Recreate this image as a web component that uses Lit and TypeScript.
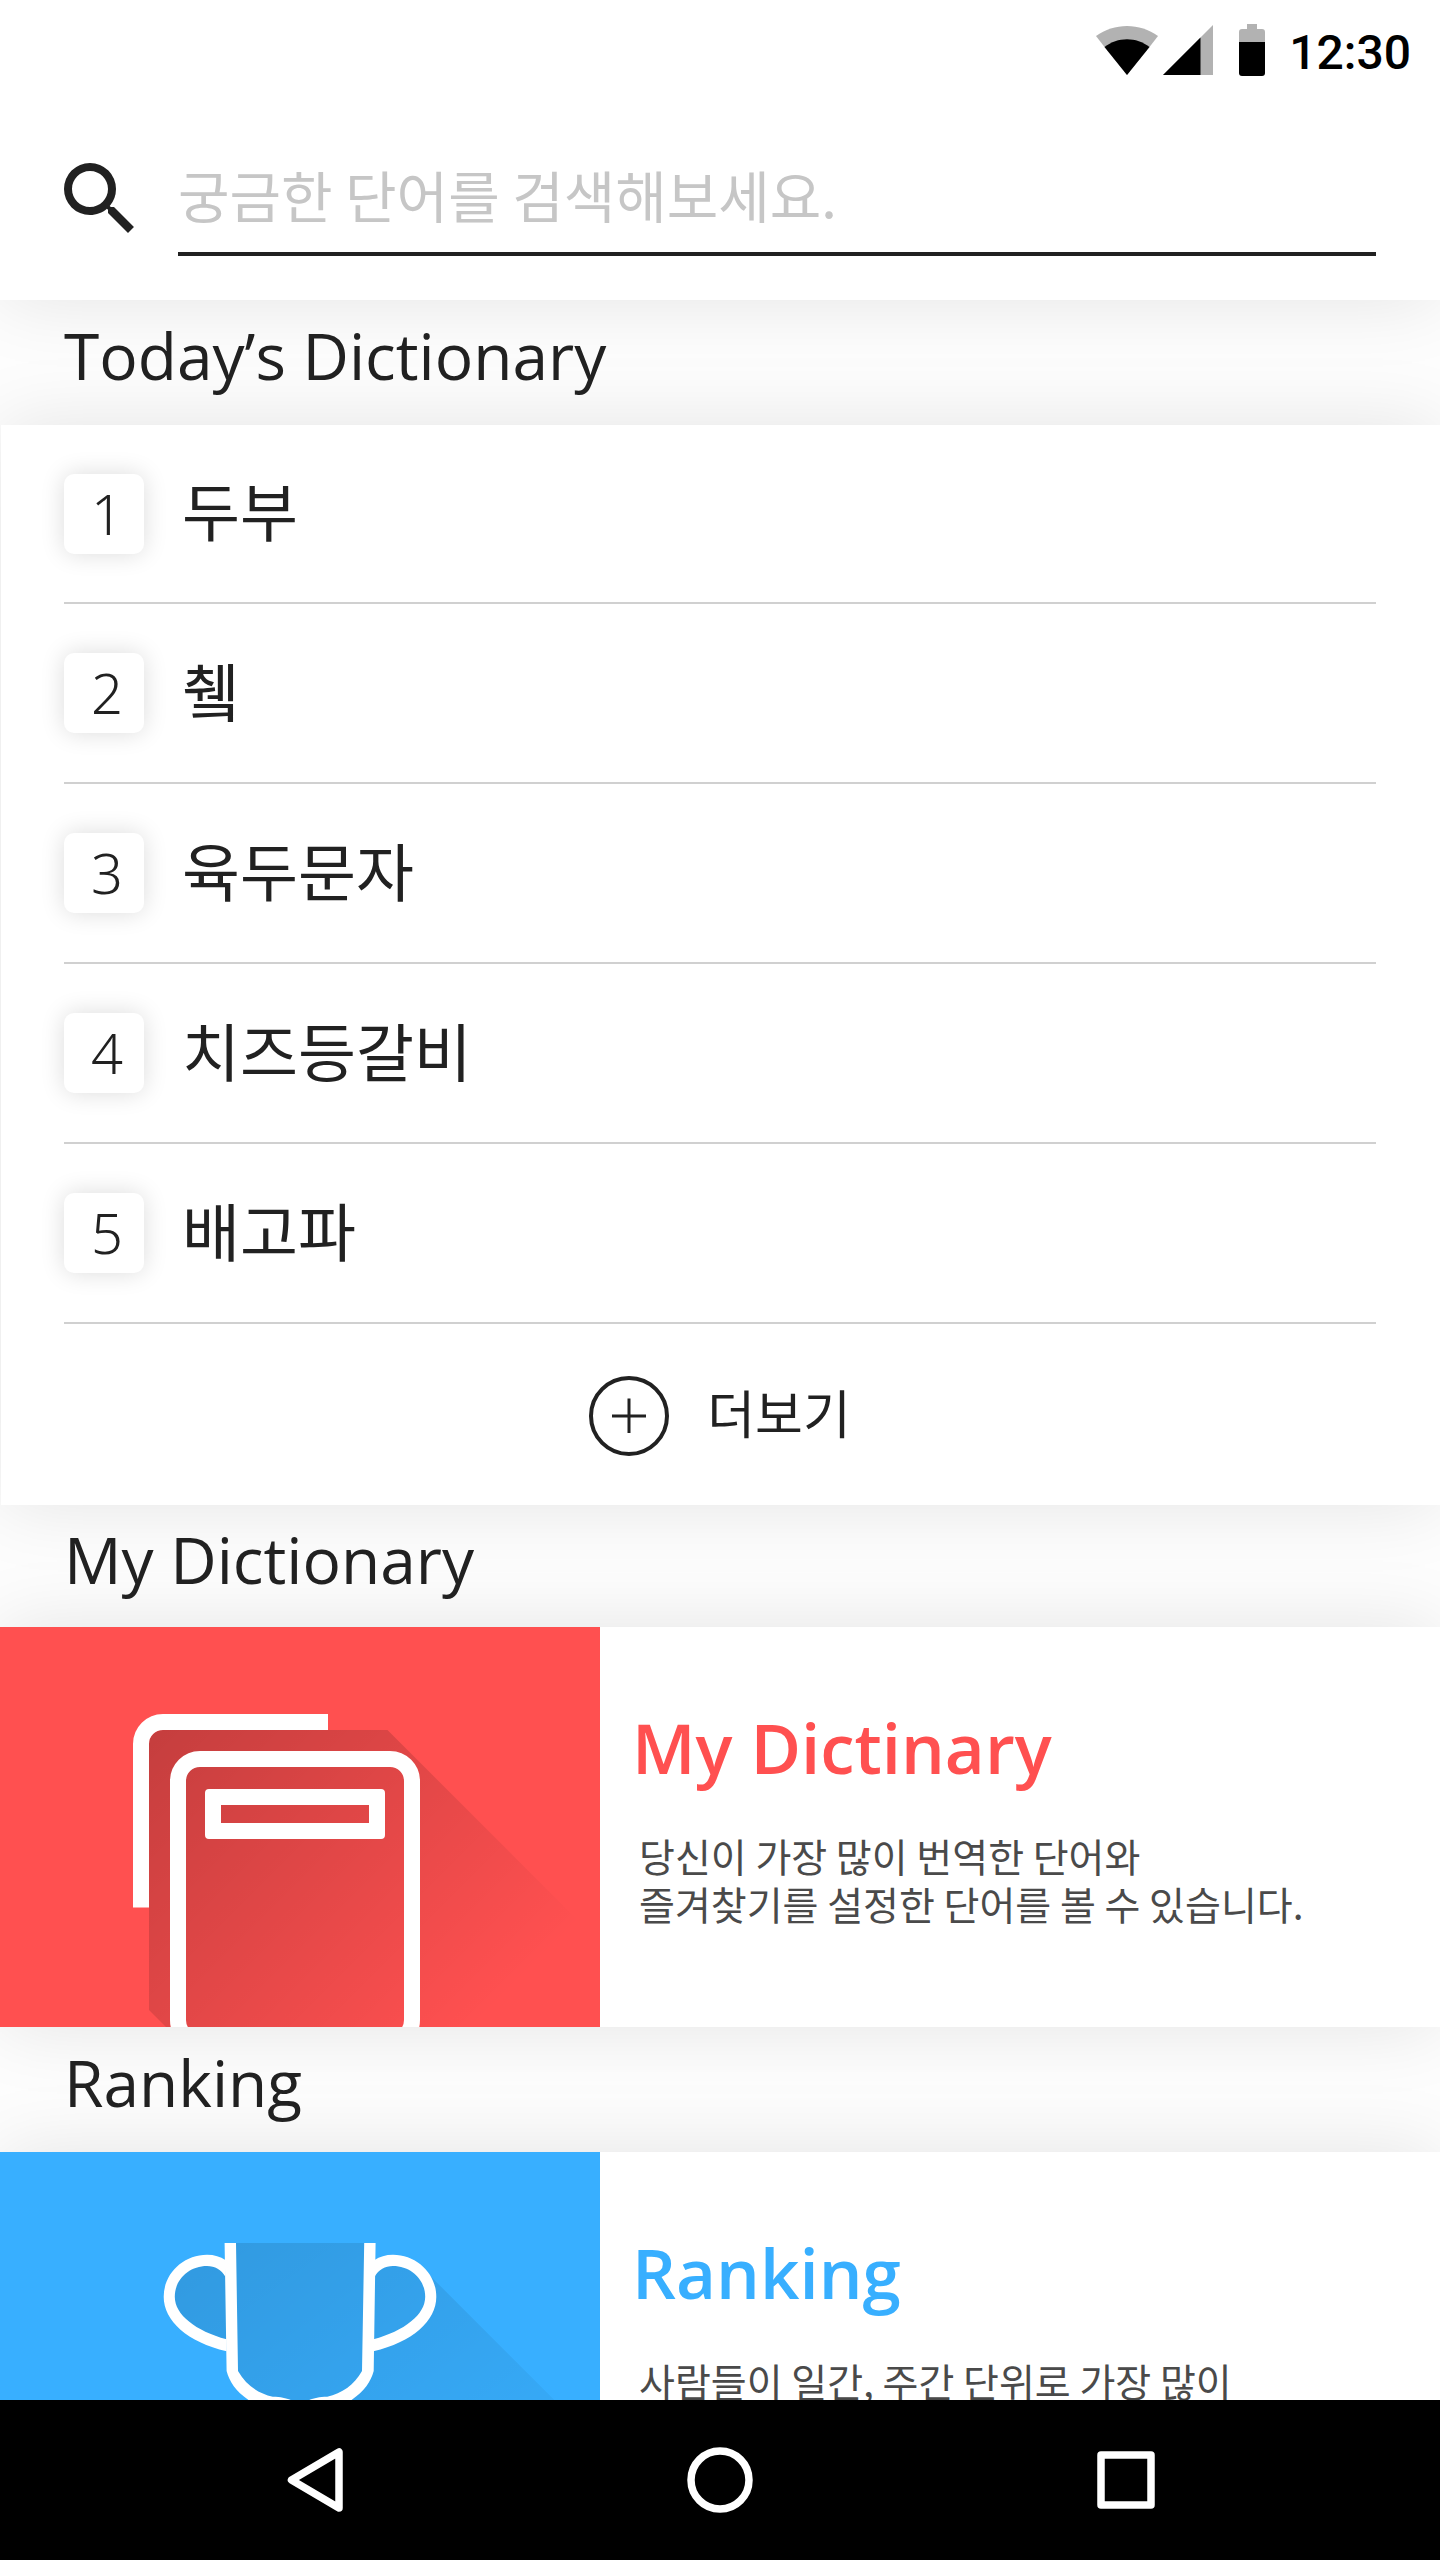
import { LitElement, html, svg, css } from "lit";
import { customElement } from "lit/decorators.js";

const words = ["두부", "췤", "육두문자", "치즈등갈비", "배고파"];

const wifiIcon = svg`<svg class="wifi" viewBox="0 0 62 49" aria-hidden="true">
  <path fill="#b2b2b2" d="M0 10C9 3.500 20 0 31 0s22 3.500 31 10L53.500 21 31 49 8.500 21z"/>
  <path fill="#000" d="M8.500 21C15 16 23 13.300 31 13.300s16 2.700 22.500 7.700L31 49z"/>
</svg>`;

const signalIcon = svg`<svg class="signal" viewBox="0 0 50 50" aria-hidden="true">
  <path fill="#b2b2b2" d="M50 0v50H0z"/>
  <path fill="#000" d="M37.500 12.500V50H0z"/>
</svg>`;

const batteryIcon = svg`<svg class="battery" viewBox="0 0 26 52" aria-hidden="true">
  <path fill="#b2b2b2" d="M8 0h10v5h5a3 3 0 0 1 3 3v12H0V8a3 3 0 0 1 3-3h5z"/>
  <path fill="#000" d="M0 18h26v31a3 3 0 0 1-3 3H3a3 3 0 0 1-3-3z"/>
</svg>`;

const searchIcon = svg`<svg class="search-icon" viewBox="3 3 17.500 17.500" aria-hidden="true">
  <path fill="#212121" d="M15.500 14h-.79l-.28-.27A6.471 6.471 0 0 0 16 9.500 6.500 6.500 0 1 0 9.500 16c1.610 0 3.090-.59 4.230-1.570l.27.28v.79l5 4.990L20.490 19l-4.990-5zm-6 0C7.010 14 5 11.990 5 9.500S7.010 5 9.500 5 14 7.010 14 9.500 11.990 14 9.500 14z"/>
</svg>`;

const plusIcon = svg`<svg class="plus" viewBox="0 0 80 80" fill="none" stroke="#212121" aria-hidden="true">
  <circle cx="40" cy="40" r="38" stroke-width="4"/>
  <path stroke-width="3" d="M23 40h34M40 22.500v34.500"/>
</svg>`;

const bookArt = svg`<svg class="drawing" viewBox="0 0 600 400" aria-hidden="true">
  <defs>
    <linearGradient id="book-shade" gradientUnits="userSpaceOnUse" x1="149" y1="103" x2="460" y2="414">
      <stop offset="0" stop-opacity=".23"/>
      <stop offset="1" stop-opacity="0"/>
    </linearGradient>
  </defs>
  <path fill="url(#book-shade)" d="M163 103h224.500L600 315.500V400H166l-17-17V117a14 14 0 0 1 14-14z"/>
  <g fill="none" stroke="#fff" stroke-width="16">
    <path d="M141 280.500V117a22 22 0 0 1 22-22h165"/>
    <rect x="178" y="132" width="234" height="283" rx="22"/>
  </g>
  <path fill="#fff" fill-rule="evenodd" d="M209 162h172a4 4 0 0 1 4 4v42a4 4 0 0 1-4 4H209a4 4 0 0 1-4-4v-42a4 4 0 0 1 4-4zM221 178v18h148v-18z"/>
</svg>`;

const cupArt = svg`<svg class="drawing" viewBox="0 0 600 400" aria-hidden="true">
  <defs>
    <linearGradient id="cup-shade" gradientUnits="userSpaceOnUse" x1="200" y1="90" x2="440" y2="420">
      <stop offset="0" stop-opacity=".12"/>
      <stop offset="1" stop-opacity=".02"/>
    </linearGradient>
  </defs>
  <path fill="url(#cup-shade)" d="M230 91h140v30c8-11 14-13 22-13 17 0 30 6 39 16.700L600 293.700V400H420L300 280l-10-32c-22 0-45-8-58-29v-25c-32-9-62-27-62-49 0-20 17-37 37-37 9 0 16 4 23 13z"/>
  <g fill="#fff">
    <path d="M224.600 91H236l2 128c8 14 20 22.500 34.800 25.700 8 0 13 1.300 18 3.300l9.200 3 9.200-3c5-2 10-3.300 18-3.300C342 241.500 354 233 362 219l2.200-128h11.400l-1.900 128c-3.200 12-10.700 22-26.700 32l-47 9-47-9c-16-10-23.200-20-26.400-32z"/>
    <path d="M225.400 108c-5-3.300-11-5.300-18.400-5.300-23.800 0-43.300 18.900-43.300 42 0 24.300 24 45.300 62.900 54.600v-12c-31-8.500-51.800-24.600-51.800-42.600 0-17.200 14.200-30.700 32.200-30.700 8 0 14.300 3.500 18.400 10.700z"/>
    <path d="M374.600 108c5-3.300 11-5.300 18.400-5.300 23.800 0 43.300 18.900 43.300 42 0 24.300-24 45.300-62.900 54.600v-12c31-8.500 51.800-24.600 51.800-42.600 0-17.200-14.200-30.700-32.200-30.700-8 0-14.300 3.500-18.400 10.700z"/>
  </g>
</svg>`;

@customElement("app-root")
export class AppRoot extends LitElement {
  static styles = css`
    :host {
      display: flex;
      flex-direction: column;
      height: 100vh;
      background: #fdfdfd;
      color: #212121;
      font-family: "Noto Sans CJK KR", "Noto Sans", sans-serif;
    }
    * { box-sizing: border-box; }
    h2, h3, p, ol { margin: 0; padding: 0; }
    svg { display: block; flex: none; }
    button {
      border: 0;
      padding: 0;
      background: none;
      color: inherit;
      font: inherit;
      cursor: pointer;
    }

    .content {
      flex: 1;
      min-height: 0;
      overflow-y: auto;
      scrollbar-width: none;
    }
    .panel {
      background: #fff;
      box-shadow: 0 0 72px rgba(0, 0, 0, 0.1);
    }

    .status {
      display: flex;
      justify-content: flex-end;
      align-items: center;
      height: 100px;
      padding-right: 29px;
      color: #000;
      font: 500 48px/56px Roboto, sans-serif;
    }
    .clock { padding-top: 6px; }
    .wifi { width: 62px; height: 49px; margin-right: 5px; }
    .signal { width: 50px; height: 50px; margin-right: 26px; }
    .battery { width: 26px; height: 52px; margin-right: 24px; }

    .search {
      display: flex;
      align-items: flex-start;
      gap: 44px;
      height: 200px;
      padding: 44px 64px 0;
    }
    .search-label { padding-top: 19px; }
    .search-icon { width: 70px; height: 70px; }
    .search-input {
      flex: 1;
      min-width: 0;
      height: 112px;
      padding: 0 0 10px;
      border: 0;
      border-bottom: 4px solid #212121;
      border-radius: 0;
      outline: 0;
      background: none;
      color: #212121;
      font: 400 56px/80px "Noto Sans CJK KR", sans-serif;
    }
    .search-input::placeholder { color: #c6c6c6; opacity: 1; }

    .band {
      display: flex;
      align-items: center;
      min-height: 125px;
      padding: 0 64px 13px;
      font: 400 64px/80px "Open Sans", "Noto Sans", sans-serif;
    }
    .band.short { min-height: 122px; }
    .band-text { position: relative; z-index: 1; font: inherit; }

    .today { margin-left: 1px; padding: 0 64px 0 63px; }
    .words { list-style: none; }
    .word {
      display: flex;
      align-items: center;
      gap: 38px;
      min-height: 180px;
      border-bottom: 2px solid #d0d0d0;
      font-size: 63px;
      line-height: 80px;
    }
    .word:first-child { min-height: 179px; }
    .word-text { padding-bottom: 9px; }
    .rank {
      flex: none;
      width: 80px;
      height: 80px;
      padding-left: 6px;
      border-radius: 10px;
      background: #fff;
      box-shadow: 0 0 24px rgba(0, 0, 0, 0.14);
      text-align: center;
      font: 350 56px/78px "Noto Sans", sans-serif;
    }
    .more {
      display: flex;
      align-items: center;
      justify-content: center;
      gap: 38px;
      width: 100%;
      height: 181px;
      padding-top: 3px;
      font-size: 52px;
      line-height: 72px;
    }
    .more-text { padding-bottom: 8px; }
    .plus { width: 80px; height: 80px; }

    .feature { display: flex; min-height: 400px; }
    .art {
      flex: none;
      width: 600px;
      max-width: 42%;
      overflow: hidden;
    }
    .art.red { background: #ff5050; }
    .art.blue { background: #38afff; }
    .drawing { width: 100%; height: auto; }
    .info {
      display: flex;
      flex-direction: column;
      flex: 1;
      padding: 72px 40px 0 32px;
    }
    .title { font: 600 69px/96px "Open Sans", "Noto Sans", sans-serif; }
    .title.red { color: #ff5050; }
    .title.blue { color: #38afff; }
    .desc {
      margin-top: 36px;
      padding-left: 7px;
      color: #4a4a4a;
      font-size: 39px;
      line-height: 48px;
      white-space: pre-line;
    }

    .nav {
      display: grid;
      grid-template-columns: repeat(3, 1fr);
      flex: none;
      height: 160px;
      padding: 0 112px;
      background: #000;
    }
    .nav-button { display: grid; place-items: center; }
    .nav-icon { width: 70px; height: 70px; }
  `;

  private feature(kind: string, title: string, text: string, art: unknown) {
    return html`<section class="panel feature">
      <div class="art ${kind}">${art}</div>
      <div class="info">
        <h3 class="title ${kind}">${title}</h3>
        <p class="desc">${text}</p>
      </div>
    </section>`;
  }

  private navButton(label: string, shape: unknown) {
    return html`<button class="nav-button" aria-label=${label}>
      <svg class="nav-icon" viewBox="0 0 70 70" fill="none" stroke="#fff" stroke-width="7.500" stroke-linejoin="round">${shape}</svg>
    </button>`;
  }

  render() {
    return html`
      <main class="content">
        <header class="panel">
          <div class="status">${wifiIcon}${signalIcon}${batteryIcon}<span class="clock">12:30</span></div>
          <form class="search" role="search">
            <label class="search-label" for="query" aria-label="검색">${searchIcon}</label>
            <input class="search-input" id="query" type="text" placeholder="궁금한 단어를 검색해보세요." />
          </form>
        </header>

        <div class="band"><h2 class="band-text">Today’s Dictionary</h2></div>
        <section class="panel today">
          <ol class="words">
            ${words.map((word, i) => html`<li class="word"><span class="rank">${i + 1}</span><span class="word-text">${word}</span></li>`)}
          </ol>
          <button class="more">${plusIcon}<span class="more-text">더보기</span></button>
        </section>

        <div class="band short"><h2 class="band-text">My Dictionary</h2></div>
        ${this.feature("red", "My Dictinary", "당신이 가장 많이 번역한 단어와\n즐겨찾기를 설정한 단어를 볼 수 있습니다.", bookArt)}

        <div class="band"><h2 class="band-text">Ranking</h2></div>
        ${this.feature("blue", "Ranking", "사람들이 일간, 주간 단위로 가장 많이", cupArt)}
      </main>

      <nav class="nav">
        ${this.navButton("뒤로", svg`<path d="M59 7v56L11.500 35z"/>`)}
        ${this.navButton("홈", svg`<circle cx="35" cy="35" r="29"/>`)}
        ${this.navButton("최근 앱", svg`<rect x="11" y="10" width="50" height="50"/>`)}
      </nav>
    `;
  }
}
